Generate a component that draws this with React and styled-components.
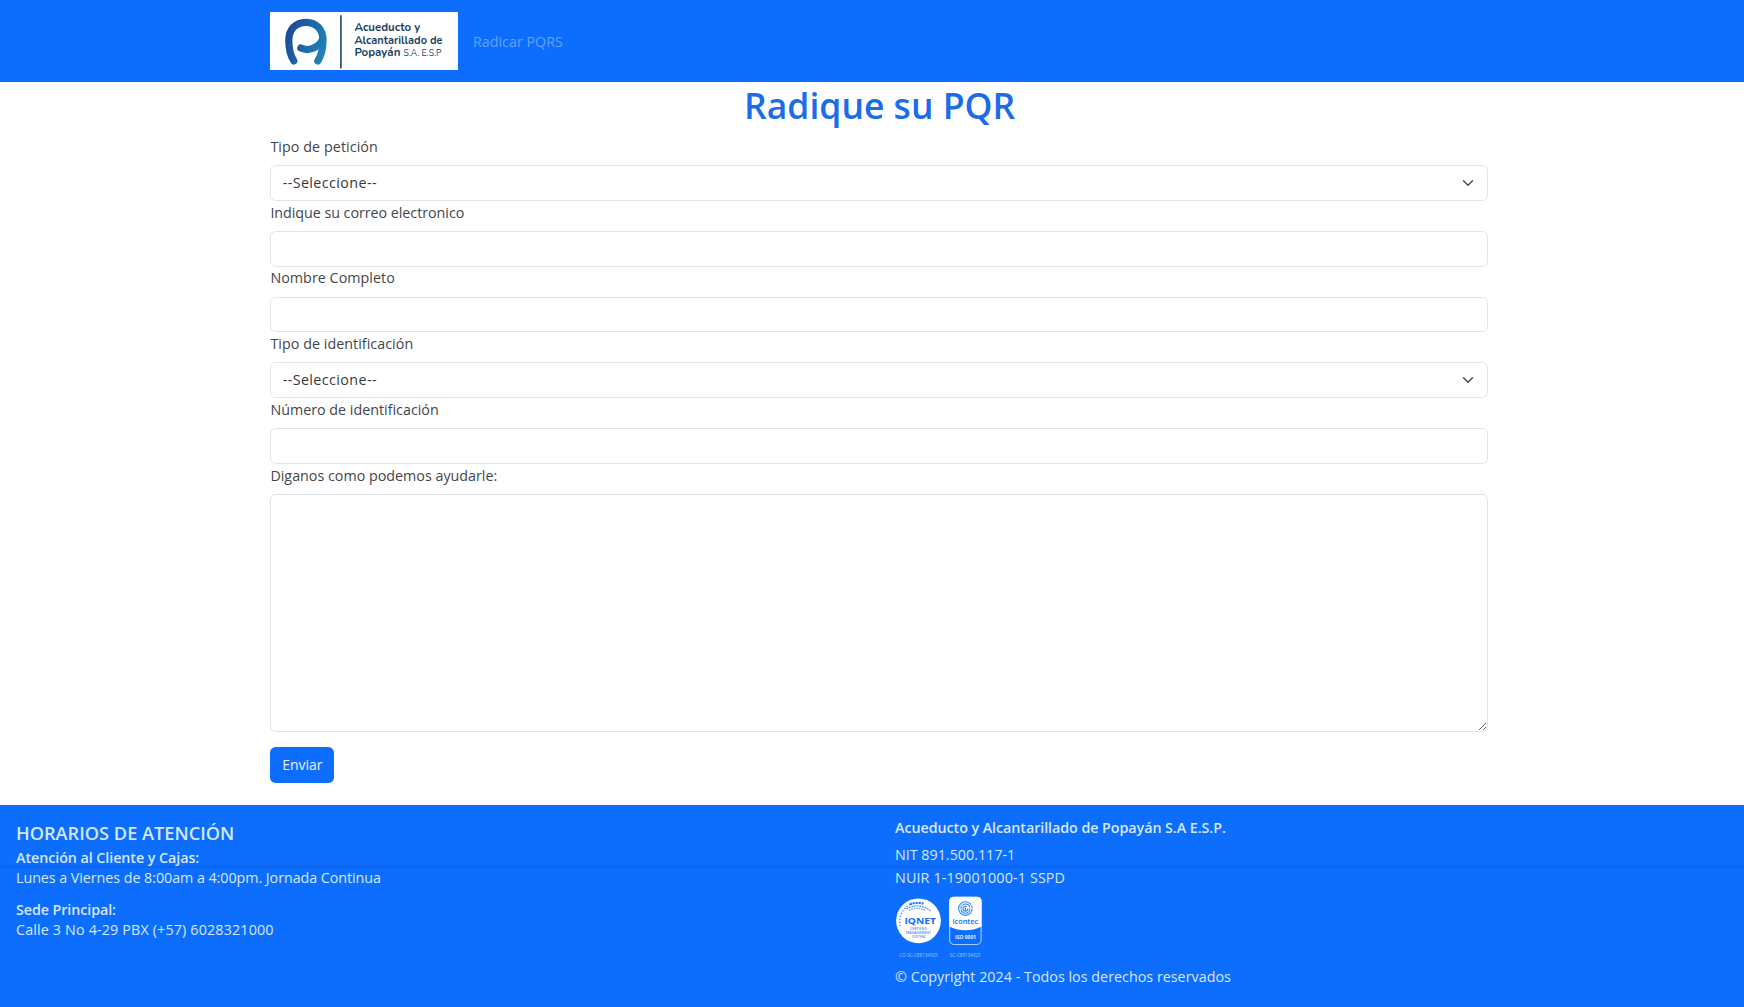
import React from 'react';
import styled, { createGlobalStyle } from 'styled-components';

const BLUE = '#0d6efd';
const FONT = '"Segoe UI", "Open Sans", "Noto Sans", sans-serif';

const GlobalStyle = createGlobalStyle`
  *, *::before, *::after { box-sizing: border-box; }
  body {
    margin: 0;
    background: #fff;
    color: #3f464d;
    font-family: ${FONT};
    font-size: 14.3px;
  }
`;

const Page = styled.div`
  display: flex;
  flex-direction: column;
  min-height: 100vh;
`;

const Navbar = styled.header`
  display: flex;
  align-items: center;
  height: 82.4px;
  padding: 0 270.4px;
  background: ${BLUE};
`;

const Brand = styled.a`
  display: flex;
  width: 187.6px;
  height: 58.4px;
  margin-right: 15px;
  background: #fff;
`;

const NavLink = styled.a`
  padding-top: 1.8px;
  color: #62a2ff;
  line-height: 22.6px;
`;

const Main = styled.main`
  display: flex;
  flex-direction: column;
  width: 1217.4px;
  margin-left: 270.4px;
`;

const Title = styled.h1`
  margin: 0 0 6.5px;
  padding: 1px 0 0 1px;
  color: #1b6bea;
  font-size: 35.5px;
  font-weight: 600;
  line-height: 45.2px;
  text-align: center;
`;

const Form = styled.form`
  display: flex;
  flex-direction: column;
  align-items: stretch;
`;

const Field = styled.div`
  display: flex;
  flex-direction: column;
`;

const Label = styled.label`
  padding-top: 0.8px;
  margin-bottom: 7.5px;
  line-height: 21.72px;
  letter-spacing: ${(p) => p.$tracking || 0}px;
`;

const Control = styled.input`
  display: block;
  width: 100%;
  height: 35.74px;
  padding: 5.6px 11.3px;
  border: 1px solid #e1e5e9;
  border-radius: 5.6px;
  background: #fff;
  color: #343a40;
  font: inherit;
  outline: none;
`;

const Select = styled(Control).attrs({ as: 'div' })`
  display: flex;
  align-items: center;
  justify-content: space-between;
  padding-right: 12.6px;
  letter-spacing: 0.4px;
  line-height: 22.6px;
`;

const TextArea = styled(Control).attrs({ as: 'textarea' })`
  height: 238.2px;
  resize: vertical;
`;

const SubmitButton = styled.button`
  align-self: flex-start;
  width: 64px;
  height: 36px;
  margin-top: 14.8px;
  padding: 0;
  border: 0;
  border-radius: 5.6px;
  background: ${BLUE};
  color: #eaf2ff;
  font: 500 14px/22px ${FONT};
`;

const Footer = styled.footer`
  display: flex;
  flex: 1;
  margin-top: 22.6px;
  background: linear-gradient(#0a62ec, #0a62ec) 0 61px / 100% 1.6px no-repeat ${BLUE};
  color: #d5e6ff;
`;

const FooterColumn = styled.div`
  display: flex;
  flex-direction: column;
  flex: none;
  align-items: flex-start;
  width: ${(p) => p.$width};
  padding: ${(p) => p.$top}px 0 0 ${(p) => p.$left}px;
`;

const FooterHeading = styled.h5`
  margin: 0 0 4px;
  font-size: 18.2px;
  font-weight: 600;
  line-height: 22px;
`;

const FooterText = styled.p`
  margin: 0 0 ${(p) => p.$gap || 0}px;
  font-weight: ${(p) => (p.$strong ? 600 : 400)};
  line-height: ${(p) => p.$line || 20}px;
  letter-spacing: ${(p) => p.$tracking || 0}px;
  white-space: nowrap;
`;

const Badges = styled.svg`
  display: block;
  overflow: visible;
  margin-bottom: 4.4px;
`;

function Logo() {
  return (
    <svg width="187.6" height="58.4" viewBox="0 0 187.6 58.4" role="img">
      <defs>
        <linearGradient id="mark" gradientUnits="userSpaceOnUse" x1="16" y1="24" x2="56" y2="40">
          <stop offset="0" stopColor="#1d4a9a" />
          <stop offset="1" stopColor="#1f86b8" />
        </linearGradient>
      </defs>
      <g fill="none" stroke="url(#mark)" strokeWidth="7.2" strokeLinecap="round">
        <path d="M23.8 48.9C20.4 43.5 18.8 37 18.8 28.5C18.8 17.5 25.5 10.4 36 10.4C46.5 10.4 53 17.5 53 28.5C53 37 51.4 43.5 47.8 48.9" />
        <path d="M30.8 36.1C35 38 41 37.8 45.4 35.2C49.5 32.8 52 30 52.8 26" />
      </g>
      <path d="M70.9 3.2V56.6" stroke="#1e4468" strokeWidth="1.6" />
      <g fill="#1c3f63" fontFamily="Nunito, Open Sans, sans-serif" fontSize="11.6" fontWeight="700">
        <text x="84.4" y="18.8" textLength="66" lengthAdjust="spacingAndGlyphs">Acueducto y</text>
        <text x="84.4" y="31.6" textLength="88.2" lengthAdjust="spacingAndGlyphs">Alcantarillado de</text>
        <text x="84.4" y="44.5" textLength="46" lengthAdjust="spacingAndGlyphs">Popayán</text>
        <text x="133.4" y="44.5" fontWeight="400" fontSize="10.6" textLength="38" lengthAdjust="spacingAndGlyphs">S.A. E.S.P</text>
      </g>
    </svg>
  );
}

function Chevron() {
  return (
    <svg width="12" height="12" viewBox="0 0 16 16" fill="none" stroke="#4a4f55" strokeWidth="2" strokeLinecap="round" strokeLinejoin="round">
      <path d="m2 5 6 6 6-6" />
    </svg>
  );
}

function Certifications() {
  return (
    <Badges width="90" height="72" viewBox="0 0 90 72">
      <g fontFamily="Open Sans, sans-serif" fill={BLUE} textAnchor="middle">
        <circle cx="23.5" cy="31.8" r="22.4" fill="#fff" />
        <g fill="none" stroke={BLUE}>
          <path d="M5.2 37A19.3 19.3 0 0 1 17 14.6" strokeWidth="1.3" strokeDasharray="1.5 1.5" opacity=".7" />
          <path d="M15 15.4C19 13.6 25 13.4 29 14.8" strokeWidth="2" strokeDasharray="2 .9" />
          <path d="M11.5 20C18 15.7 28 15.4 35.5 22" strokeWidth="1.3" strokeDasharray="1.7 1" opacity=".8" />
          <path d="M14 21.5C20 18.6 26 18.5 31 22" strokeWidth="1.1" strokeDasharray="1.4 1.1" opacity=".7" />
        </g>
        <text x="25.2" y="35.2" fontSize="9.4" fontWeight="700" textLength="31.6" lengthAdjust="spacingAndGlyphs">IQNET</text>
        <g fontSize="3.2" fontWeight="600" opacity=".8">
          <text x="23.6" y="41.2" textLength="17" lengthAdjust="spacingAndGlyphs">CERTIFIED</text>
          <text x="23.6" y="45.1" textLength="25" lengthAdjust="spacingAndGlyphs">MANAGEMENT</text>
          <text x="23.6" y="49" textLength="13" lengthAdjust="spacingAndGlyphs">SYSTEM</text>
        </g>
        <rect x="54.7" y="8.3" width="31.4" height="47.2" rx="4.6" fill={BLUE} stroke="#a9ccff" strokeWidth="1.1" />
        <path d="M54.2 12.5Q54.2 7.8 59 7.8H82Q86.6 7.8 86.6 12.5V37.5Q70.4 45.2 54.2 37.5Z" fill="#fff" />
        <g fill="none" stroke={BLUE} strokeWidth="1.1" opacity=".85">
          <circle cx="70.4" cy="19.6" r="6.8" strokeDasharray="38 1.2 2.5 1" />
          <circle cx="70.4" cy="19.6" r="4.6" strokeDasharray="13 1" />
          <circle cx="70.4" cy="19.8" r="2.5" strokeDasharray="13 2" />
          <path d="M70.4 18.6v3.4" strokeWidth="1.3" />
        </g>
        <text x="70.3" y="34.6" fontSize="7" fontWeight="600" textLength="25.6" lengthAdjust="spacingAndGlyphs">icontec</text>
        <text x="70.6" y="49.8" fontSize="5" fontWeight="700" fill="#e4efff" textLength="21" lengthAdjust="spacingAndGlyphs">ISO 9001</text>
        <g fontSize="5.8" fill="#9cc4ff">
          <text x="23.5" y="67.5" textLength="38.4" lengthAdjust="spacingAndGlyphs">CO-SC-CER134925</text>
          <text x="70.4" y="67.5" textLength="30.6" lengthAdjust="spacingAndGlyphs">SC-CER134925</text>
        </g>
      </g>
    </Badges>
  );
}

const FIELDS = [
  { id: 'tipo', label: 'Tipo de petición', select: true, tracking: 0.07 },
  { id: 'correo', label: 'Indique su correo electronico', tracking: -0.04 },
  { id: 'nombre', label: 'Nombre Completo', tracking: 0.04 },
  { id: 'tipoId', label: 'Tipo de identificación', select: true, tracking: 0.04 },
  { id: 'numeroId', label: 'Número de identificación' },
];

export default function App() {
  return (
    <Page>
      <GlobalStyle />
      <Navbar>
        <Brand><Logo /></Brand>
        <NavLink>Radicar PQRS</NavLink>
      </Navbar>
      <Main>
        <Title>Radique su PQR</Title>
        <Form>
          {FIELDS.map((f) => (
            <Field key={f.id}>
              <Label htmlFor={f.id} $tracking={f.tracking}>{f.label}</Label>
              {f.select ? (
                <Select id={f.id}>--Seleccione--<Chevron /></Select>
              ) : (
                <Control id={f.id} />
              )}
            </Field>
          ))}
          <Field>
            <Label htmlFor="mensaje">Diganos como podemos ayudarle:</Label>
            <TextArea id="mensaje" />
          </Field>
          <SubmitButton type="button">Enviar</SubmitButton>
        </Form>
      </Main>
      <Footer>
        <FooterColumn $width="895px" $top={16.7} $left={16}>
          <FooterHeading>HORARIOS DE ATENCIÓN</FooterHeading>
          <FooterText $strong $tracking={-0.06}>Atención al Cliente y Cajas:</FooterText>
          <FooterText $gap={11.8} $tracking={-0.05}>Lunes a Viernes de 8:00am a 4:00pm. Jornada Continua</FooterText>
          <FooterText $strong $tracking={-0.08}>Sede Principal:</FooterText>
          <FooterText $tracking={0.16}>Calle 3 No 4-29 PBX (+57) 6028321000</FooterText>
        </FooterColumn>
        <FooterColumn $width="849px" $top={12.6} $left={0}>
          <FooterText $strong $gap={6} $tracking={-0.06}>Acueducto y Alcantarillado de Popayán S.A E.S.P.</FooterText>
          <FooterText $line={22.6}>NIT 891.500.117-1</FooterText>
          <FooterText $line={22.6} $tracking={0.14}>NUIR 1-19001000-1 SSPD</FooterText>
          <Certifications />
          <FooterText $line={22.6} $tracking={0.02}>© Copyright 2024 - Todos los derechos reservados</FooterText>
        </FooterColumn>
      </Footer>
    </Page>
  );
}
